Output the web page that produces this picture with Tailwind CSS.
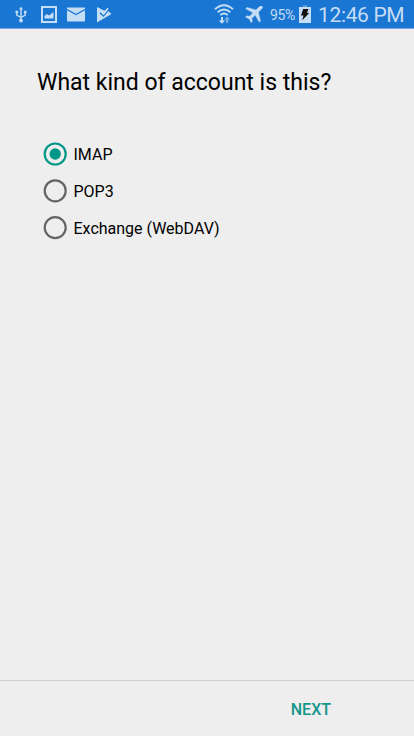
<!DOCTYPE html>
<html lang="en">
<head>
<meta charset="utf-8">
<title>Account type</title>
<script src="https://cdn.jsdelivr.net/npm/@tailwindcss/browser@4"></script>
</head>
<body class="bg-[#eeeeee] font-[Roboto,sans-serif] text-black">
<div class="flex h-[736px] w-[414px] flex-col overflow-hidden">
  <header class="flex h-[29px] shrink-0 items-start border-b border-[#7fa6e2] bg-[#1976d2] text-[#c5ddf5]">
    <!-- USB -->
    <svg class="ml-[15px] mt-[6px] h-[18px] w-[12px] shrink-0" viewBox="0 0 12 18" fill="none" stroke="currentColor" stroke-width="1.4"><path d="M6 2v12M1.800 6v3.200L6 11.500l4.200-2.300V6"/><path d="M6 0.500l2 3H4zM.5 4.800h2.600v2.400H.5zM8.900 4.800h2.600v2.400H8.900z" fill="currentColor" stroke="none"/><circle cx="6" cy="14.500" r="1.900" fill="currentColor" stroke="none"/></svg>
    <!-- Picture -->
    <svg class="ml-[14px] mt-[6px] h-[17px] w-[16px] shrink-0" viewBox="0 0 16 17"><path d="M1 1h14v15H1z" fill="none" stroke="currentColor" stroke-width="2"/><path d="M3.500 12.500V10l2.500-2 2 1.500L12.500 6v6.500z" fill="currentColor"/></svg>
    <!-- Mail -->
    <svg class="ml-[10px] mt-[7px] h-[15px] w-[18px] shrink-0" viewBox="0 0 18 15"><path d="M0 0.500h18v14H0z" fill="currentColor"/><path d="M0 2.500l9 5 9-5" fill="none" stroke="#1976d2" stroke-width="1.300"/></svg>
    <!-- Play with tick -->
    <svg class="ml-[12px] mt-[7px] h-[16px] w-[15px] shrink-0" viewBox="0 0 15 16"><path d="M0 0L7 3.500 10 3 14.500 7 0 15.500z" fill="currentColor"/><path d="M3 5.700l3.400 3.200L12 2.200" fill="none" stroke="#1976d2" stroke-width="1.500"/><path d="M5.500 6l1 1L11 1.300" fill="none" stroke="currentColor" stroke-width="1.700"/></svg>
    <!-- Wi-Fi -->
    <svg class="ml-[102px] mt-[4px] h-[20px] w-[20px] shrink-0" viewBox="0 0 20 20" fill="none" stroke="currentColor" stroke-width="1.900"><path d="M1 5.300Q10-2.800 19 5.300M3.700 8.200q6.300-5.300 12.600 0M6.300 11q3.700-3 7.400 0"/><path d="M7 13v3.500H4.700l3.300 3.300 3.200-3.300H9V13z" fill="currentColor" stroke="none"/><path d="M12 18.800v-3.300h-1.600l2.700-3 2.700 3h-1.600v3.300z" fill="currentColor" fill-opacity=".55" stroke="none"/></svg>
    <!-- Airplane -->
    <svg class="ml-[11px] mt-[6px] h-[17px] w-[18px] shrink-0" viewBox="0 0 18 17" fill="currentColor" stroke="currentColor" stroke-width=".5"><path d="M17.200.5c-.9-.8-2.300-.3-3.200.5l-3 3L2 1.500.8 2.700l7.200 4.100-3.300 3.500-3-.5L.5 11l3.800 1.900L6 16.500l1.300-1.100-.5-3.100 3.500-3.200 3.900 7 1.300-1.200-2.200-8.700 3-2.900c.9-.8 1.600-2 .9-2.800z"/></svg>
    <span class="ml-[7px] mt-[7px] w-[26px] shrink-0 whitespace-nowrap text-[14px] leading-[17px] tracking-[-0.4px]">95%</span>
    <!-- Charging battery -->
    <svg class="ml-[3px] mt-[5px] h-[18px] w-[12px] shrink-0" viewBox="0 0 12 18"><path d="M4 0h4v2H4z" fill="#5a9bdc"/><path d="M0 2h12v16H0z" fill="#c5ddf5"/><path d="M4.200 4H9.500L8 8h2.200l-6.900 7.200L4.500 10.500H2z" fill="#111"/></svg>
    <span class="ml-[7px] mt-[3px] whitespace-nowrap text-[21px] leading-[25px] tracking-[-0.35px]">12:46 PM</span>
  </header>

  <main class="flex-1 px-[37px] pt-[39px]">
    <h1 class="whitespace-nowrap text-[23px] leading-[30px]">What kind of account is this?</h1>
    <div class="ml-[6px] mt-[37px] flex flex-col" role="radiogroup">
      <div class="flex h-[37px] items-center gap-[6.500px]">
        <svg class="size-[24px]" viewBox="0 0 24 24"><circle cx="12.200" cy="12" r="10.500" fill="none" stroke="#009688" stroke-width="2.200"/><circle cx="12.200" cy="12" r="5.700" fill="#009688"/></svg>
        <span class="mt-[3px] text-[16px]">IMAP</span>
      </div>
      <div class="flex h-[37px] items-center gap-[6.500px]">
        <svg class="size-[24px]" viewBox="0 0 24 24"><circle cx="12.200" cy="11.800" r="10.500" fill="none" stroke="#656565" stroke-width="2.200"/></svg>
        <span class="mt-[3px] text-[16px]">POP3</span>
      </div>
      <div class="flex h-[37px] items-center gap-[6.500px]">
        <svg class="size-[24px]" viewBox="0 0 24 24"><circle cx="12.200" cy="11.600" r="10.500" fill="none" stroke="#656565" stroke-width="2.200"/></svg>
        <span class="mt-[3px] text-[16px]">Exchange (WebDAV)</span>
      </div>
    </div>
  </main>

  <footer class="flex h-[56px] shrink-0 items-center justify-end border-t border-[#d0d0d0] pr-[83px]">
    <button class="mt-[3px] text-[16px] font-medium text-[#14968a]">NEXT</button>
  </footer>
</div>
</body>
</html>
